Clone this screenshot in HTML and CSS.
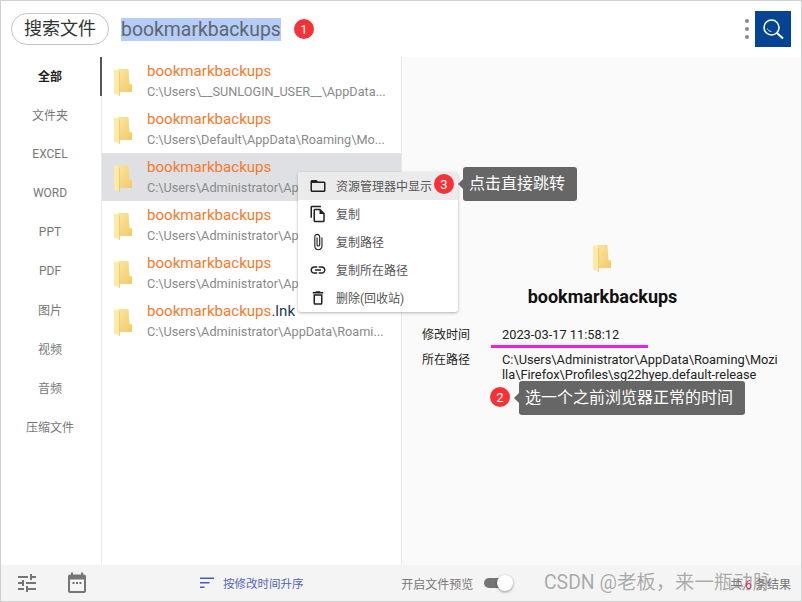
FILE: index.html
```html
<!DOCTYPE html>
<html lang="zh">
<head>
<meta charset="utf-8">
<title>搜索文件</title>
<link rel="stylesheet" href="styles.css">
</head>
<body>
<svg class="defs" width="0" height="0" aria-hidden="true">
  <defs>
    <linearGradient id="fg" x1="0" y1="0" x2="1" y2="1">
      <stop offset="0" stop-color="#fbe6a0"/>
      <stop offset="1" stop-color="#f2cb68"/>
    </linearGradient>
    <symbol id="folder" viewBox="0 0 18 27">
      <path d="M3 0H14.500L15.500 15L18 15.500V23H5V3Z" fill="url(#fg)"/>
      <path d="M0 0L5.500 2.500V27L0 24.500Z" fill="#fdeaa8"/>
      <path d="M5.500 2.500V27" stroke="#e6c163" stroke-width=".7"/>
    </symbol>
  </defs>
</svg>
<main class="app">
  <header class="top">
    <button class="title-pill">搜索文件</button>
    <span class="query">bookmarkbackups</span>
    <span class="badge badge-1">1</span>
    <span class="spacer"></span>
    <span class="dots"><i></i><i></i><i></i></span>
    <button class="search-btn" aria-label="搜索">
      <svg width="24" height="24" viewBox="0 0 24 24" fill="none" stroke="#fff">
        <circle cx="10.500" cy="10.500" r="7.500" stroke-width="1.600"/>
        <path d="M16 16L22 21.500" stroke-width="2"/>
        <path d="M6.500 11.500C7 13.500 8.500 14.500 10.500 14.500" stroke-width="1" opacity=".8"/>
      </svg>
    </button>
  </header>
  <div class="body">
    <nav class="side">
      <a class="side-item active">全部</a>
      <a class="side-item">文件夹</a>
      <a class="side-item">EXCEL</a>
      <a class="side-item">WORD</a>
      <a class="side-item">PPT</a>
      <a class="side-item">PDF</a>
      <a class="side-item">图片</a>
      <a class="side-item">视频</a>
      <a class="side-item">音频</a>
      <a class="side-item">压缩文件</a>
    </nav>
    <section class="list">
      <div class="row">
        <svg class="folder"><use href="#folder"/></svg>
        <div class="row-text"><div class="name">bookmarkbackups</div><div class="path">C:\Users\__SUNLOGIN_USER__\AppData...</div></div>
      </div>
      <div class="row">
        <svg class="folder"><use href="#folder"/></svg>
        <div class="row-text"><div class="name">bookmarkbackups</div><div class="path">C:\Users\Default\AppData\Roaming\Mo...</div></div>
      </div>
      <div class="row selected">
        <svg class="folder"><use href="#folder"/></svg>
        <div class="row-text"><div class="name">bookmarkbackups</div><div class="path">C:\Users\Administrator\AppData\Roami...</div></div>
      </div>
      <div class="row">
        <svg class="folder"><use href="#folder"/></svg>
        <div class="row-text"><div class="name">bookmarkbackups</div><div class="path">C:\Users\Administrator\AppData\Roami...</div></div>
      </div>
      <div class="row">
        <svg class="folder"><use href="#folder"/></svg>
        <div class="row-text"><div class="name">bookmarkbackups</div><div class="path">C:\Users\Administrator\AppData\Roami...</div></div>
      </div>
      <div class="row">
        <svg class="folder"><use href="#folder"/></svg>
        <div class="row-text"><div class="name">bookmarkbackups<span class="ext">.lnk</span></div><div class="path">C:\Users\Administrator\AppData\Roami...</div></div>
      </div>
    </section>
    <section class="preview">
      <svg class="folder preview-icon"><use href="#folder"/></svg>
      <h1 class="preview-name">bookmarkbackups</h1>
      <dl class="meta">
        <dt>修改时间</dt>
        <dd>2023-03-17 11:58:12</dd>
        <dt class="meta-gap">所在路径</dt>
        <dd class="meta-gap-value">C:\Users\Administrator\AppData\Roaming\Mozilla\Firefox\Profiles\sg22hyep.default-release</dd>
      </dl>
    </section>
  </div>
  <footer class="bottom">
    <svg class="foot-icon" width="24" height="24" viewBox="0 0 24 24" fill="#757575"><path d="M3 17v2h6v-2H3zM3 5v2h10V5H3zm10 16v-2h8v-2h-8v-2h-2v6h2zM7 9v2H3v2h4v2h2V9H7zm14 4v-2H11v2h10zm-6-4h2V7h4V5h-4V3h-2v6z"/></svg>
    <svg class="foot-icon cal" width="24" height="24" viewBox="0 0 24 24"><path fill="#757575" d="M19 3.500h-1V1.500h-2v2H8v-2H6v2H5C3.900 3.500 3 4.400 3 5.500v14.500c0 1.100.9 2 2 2h14c1.100 0 2-.9 2-2V5.500c0-1.100-.9-2-2-2z"/><path fill="#f6f6f6" d="M5 8.500h14V20H5z"/><path fill="#6f6f6f" d="M7.500 11h2v2h-2zM11 11h2v2h-2zM14.500 11h2v2h-2z"/></svg>
    <div class="sort">
      <svg width="16" height="18" viewBox="0 0 16 18" fill="#4a5bc0"><path d="M1 3.500h14v1.500H1zM1 8h9.500v1.500H1zM1 12.500h4.500v1.500H1z"/></svg>
      <span>按修改时间升序</span>
    </div>
    <span class="spacer"></span>
    <span class="foot-label">开启文件预览</span>
    <span class="toggle"><i></i></span>
    <span class="count">共 <b>6</b> 条结果</span>
  </footer>

  <div class="menu">
    <div class="menu-item hot">
      <svg width="18" height="18" viewBox="0 0 24 24" fill="#212121"><path d="M20 6h-8l-2-2H4c-1.100 0-2 .9-2 2v12c0 1.100.9 2 2 2h16c1.100 0 2-.9 2-2V8c0-1.100-.9-2-2-2zm0 12H4V8h16v10z"/></svg>
      <span>资源管理器中显示</span>
    </div>
    <div class="menu-item">
      <svg width="18" height="18" viewBox="0 0 24 24" fill="#212121"><path d="M16 1H4c-1.100 0-2 .9-2 2v14h2V3h12V1zm-1 4H8c-1.100 0-1.990.9-1.990 2L6 21c0 1.100.89 2 1.990 2H19c1.100 0 2-.9 2-2V11l-6-6zM8 21V7h6v5h5v9H8z"/></svg>
      <span>复制</span>
    </div>
    <div class="menu-item">
      <svg width="18" height="18" viewBox="0 0 24 24" fill="#212121"><path d="M16.500 6v11.500c0 2.210-1.790 4-4 4s-4-1.790-4-4V5c0-1.380 1.120-2.500 2.500-2.500s2.500 1.120 2.500 2.500v10.500c0 .55-.45 1-1 1s-1-.45-1-1V6H10v9.500c0 1.380 1.120 2.500 2.500 2.500s2.500-1.120 2.500-2.500V5c0-2.210-1.790-4-4-4S7 2.790 7 5v12.500c0 3.040 2.460 5.500 5.500 5.500s5.500-2.460 5.500-5.500V6h-1.500z"/></svg>
      <span>复制路径</span>
    </div>
    <div class="menu-item">
      <svg width="18" height="18" viewBox="0 0 24 24" fill="#212121"><path d="M3.900 12c0-1.710 1.390-3.100 3.100-3.100h4V7H7c-2.760 0-5 2.240-5 5s2.240 5 5 5h4v-1.900H7c-1.710 0-3.100-1.390-3.100-3.100zM8 13h8v-2H8v2zm9-6h-4v1.900h4c1.710 0 3.100 1.390 3.100 3.100s-1.390 3.100-3.100 3.100h-4V17h4c2.760 0 5-2.240 5-5s-2.240-5-5-5z"/></svg>
      <span>复制所在路径</span>
    </div>
    <div class="menu-item">
      <svg width="18" height="18" viewBox="0 0 24 24" fill="#212121"><path d="M6 19c0 1.100.9 2 2 2h8c1.100 0 2-.9 2-2V7H6v12zM8 9h8v10H8V9zm7.500-5l-1-1h-5l-1 1H5v2h14V4h-3.500z"/></svg>
      <span>删除(回收站)</span>
    </div>
  </div>

  <span class="badge badge-3">3</span>
  <div class="tip tip-3">点击直接跳转</div>

  <span class="mark-line"></span>
  <span class="badge badge-2">2</span>
  <div class="tip tip-2">选一个之前浏览器正常的时间</div>

  <div class="watermark">CSDN @老板，来一瓶动脉</div>
</main>
</body>
</html>
```

FILE: styles.css
```css
* { box-sizing: border-box; }
html, body { margin: 0; padding: 0; background: #fff; }
body {
  width: 802px;
  height: 602px;
  overflow: hidden;
  font-family: Roboto, "Noto Sans CJK SC", sans-serif;
}
.defs { position: absolute; }
.app {
  position: relative;
  width: 802px;
  height: 602px;
  border: 1px solid #d0d0d0;
  display: flex;
  flex-direction: column;
}
.top {
  height: 56px;
  flex: none;
  display: flex;
  align-items: center;
  padding: 0 10px;
  background: #fff;
}
.title-pill {
  width: 98px;
  height: 32px;
  border: 1px solid #c4c4c4;
  border-radius: 16px;
  background: #fff;
  color: #333;
  font-family: inherit;
  font-size: 18px;
  line-height: 28px;
  padding: 0;
}
.query {
  margin-left: 12px;
  font-size: 19.400px;
  line-height: 23px;
  color: #5f6672;
  background: #b5cdf7;
}
.badge {
  display: inline-flex;
  align-items: center;
  justify-content: center;
  width: 20px;
  height: 20px;
  border-radius: 50%;
  background: #f73135;
  color: #fff;
  font-size: 13px;
}
.badge-1 { margin-left: 13px; }
.spacer { flex: 1; }
.dots { display: flex; flex-direction: column; gap: 4px; margin-right: 6px; }
.dots i { width: 4px; height: 4px; border-radius: 50%; background: #8a8a8a; }
.search-btn {
  width: 36px;
  height: 36px;
  border: 0;
  padding: 0;
  background: #054493;
  display: flex;
  align-items: center;
  justify-content: center;
}
.body { flex: 1; min-height: 0; display: flex; }
.side { width: 101px; flex: none; border-right: 1px solid #e9ebef; background: #fff; }
.side-item {
  display: flex;
  align-items: center;
  justify-content: center;
  height: 39px;
  padding: 0 2px 2px 0;
  font-size: 12px;
  color: #777;
}
.side-item.active {
  color: #222;
  font-weight: 700;
  margin-right: -1px;
  border-right: 2px solid #555;
  padding-right: 1px;
}
.list { width: 299px; flex: none; background: #fff; }
.row { height: 48px; display: flex; align-items: center; padding-left: 12px; overflow: hidden; }
.row.selected { background: #dee0e4; }
.folder { width: 18px; height: 27px; flex: none; }
.row .folder { margin-top: 2px; }
.row-text { margin: 0 0 2px 15px; min-width: 0; white-space: nowrap; }
.name { font-size: 15.100px; line-height: 22px; padding-top: 1px; color: #f8792b; }
.ext { color: #1d3557; }
.path { font-size: 12.700px; line-height: 19px; color: #8a8a8a; }
.preview {
  flex: 1;
  min-width: 0;
  background: #fafafa;
  border-left: 1px solid #e9e9e9;
  display: flex;
  flex-direction: column;
  padding-top: 188px;
}
.preview-icon { align-self: center; }
.preview-name {
  margin: 14px 0 0;
  padding-left: 2px;
  text-align: center;
  font-size: 18px;
  line-height: 22px;
  font-weight: 700;
  color: #111;
}
.meta {
  margin: 20px 21px 0 20px;
  display: grid;
  grid-template-columns: 80px 1fr;
  font-size: 12px;
  line-height: 15px;
  color: #222;
}
.meta dt, .meta dd { margin: 0; }
.meta dd { margin-top: -1px; word-break: break-all; font-size: 12.800px; }
.meta dt.meta-gap { margin-top: 10px; }
.meta dd.meta-gap-value { margin-top: 9px; }
.bottom {
  height: 36px;
  flex: none;
  display: flex;
  align-items: center;
  background: #f4f4f4;
  padding: 0 10px 0 14px;
  font-size: 11.500px;
  color: #777;
}
.foot-icon { flex: none; }
.cal { margin-left: 26px; }
.sort { display: flex; align-items: center; margin-left: 110px; gap: 8px; color: #5263c4; }
.foot-label { color: #777; font-size: 12px; }
.toggle {
  position: relative;
  width: 26px;
  height: 10px;
  margin-left: 11px;
  border-radius: 5px;
  background: #757575;
}
.toggle i {
  position: absolute;
  right: -3px;
  top: -3px;
  width: 16px;
  height: 16px;
  border-radius: 50%;
  background: #fff;
  box-shadow: 0 1px 3px rgba(0, 0, 0, .4);
}
.count { margin-left: 220px; font-size: 12px; color: #777; white-space: nowrap; }
.count b { color: #e0245e; font-weight: 400; }
.menu {
  position: absolute;
  left: 297px;
  top: 171px;
  width: 160px;
  background: #fff;
  border-radius: 3px;
  box-shadow: 0 1px 3px rgba(0, 0, 0, .3);
  overflow: hidden;
}
.menu-item {
  height: 28px;
  display: flex;
  align-items: center;
  padding-left: 11px;
  gap: 9px;
  font-size: 12px;
  color: #555;
}
.menu-item span { padding-bottom: 2px; }
.menu-item.hot { background: #ebebeb; }
.badge-3 { position: absolute; left: 433px; top: 173px; }
.badge-2 { position: absolute; left: 489px; top: 386px; }
.tip {
  position: absolute;
  background: #666;
  color: #fff;
  border-radius: 3px;
  font-size: 16px;
  line-height: 34px;
  height: 34px;
  white-space: nowrap;
}
.tip::before {
  content: "";
  position: absolute;
  left: -5px;
  top: 12px;
  border-style: solid;
  border-width: 5px 5px 5px 0;
  border-color: transparent #666 transparent transparent;
}
.tip-3 { left: 462px; top: 166px; width: 114px; padding-left: 6px; }
.tip-2 { left: 518px; top: 380px; width: 226px; padding-left: 6px; }
.mark-line { position: absolute; left: 490px; top: 344px; width: 157px; height: 3px; background: #ee1fe5; }
.watermark {
  position: absolute;
  left: 543px;
  top: 570px;
  font-size: 19.400px;
  line-height: 24px;
  color: rgba(120, 120, 120, .6);
  white-space: nowrap;
}
```
